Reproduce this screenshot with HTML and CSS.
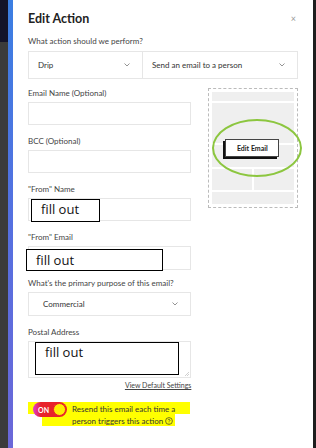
FILE: index.html
```html
<!DOCTYPE html>
<html lang="en">
<head>
    <meta charset="UTF-8">
    <meta name="viewport" content="width=device-width, initial-scale=1.0">
    <title>Edit Action</title>
    <link rel="stylesheet" href="styles.css">
</head>
<body>

    <div class="screen">
        <div class="backdrop"><div class="backdrop-top"></div></div>
        <div class="accent"></div>

        <div class="modal">
            <div class="modal-header">
                <h1>Edit Action</h1>
                <span class="close">&times;</span>
            </div>

            <div class="field-label">What action should we perform?</div>
            <div class="action-row">
                <div class="select select-type">
                    <span>Drip</span>
                    <svg class="chevron" width="6" height="4" viewBox="0 0 6 4"><polyline points="0.5,0.5 3,3 5.5,0.5" /></svg>
                </div>
                <div class="select select-action">
                    <span>Send an email to a person</span>
                    <svg class="chevron" width="6" height="4" viewBox="0 0 6 4"><polyline points="0.5,0.5 3,3 5.5,0.5" /></svg>
                </div>
            </div>

            <div class="form-body">
                <div class="fields">
                    <div class="field">
                        <div class="field-label">Email Name (Optional)</div>
                        <div class="input"></div>
                    </div>
                    <div class="field">
                        <div class="field-label">BCC (Optional)</div>
                        <div class="input"></div>
                    </div>
                    <div class="field">
                        <div class="field-label">"From" Name</div>
                        <div class="input">
                            <div class="note note-name">fill out</div>
                        </div>
                    </div>
                    <div class="field field-tight">
                        <div class="field-label">"From" Email</div>
                        <div class="input input-tall">
                            <div class="note note-email">fill out</div>
                        </div>
                    </div>
                    <div class="field">
                        <div class="field-label">What's the primary purpose of this email?</div>
                        <div class="select select-purpose">
                            <span>Commercial</span>
                            <svg class="chevron" width="6" height="4" viewBox="0 0 6 4"><polyline points="0.5,0.5 3,3 5.5,0.5" /></svg>
                        </div>
                    </div>
                    <div class="field">
                        <div class="field-label">Postal Address</div>
                        <div class="input textarea">
                            <div class="note note-address">fill out</div>
                            <svg class="grip" width="5" height="5" viewBox="0 0 5 5"><line x1="1" y1="5" x2="5" y2="1" /><line x1="3" y1="5" x2="5" y2="3" /></svg>
                        </div>
                    </div>
                    <div class="settings-link"><a href="#">View Default Settings</a></div>
                </div>

                <div class="preview">
                    <div class="preview-box">
                        <div class="block block-top"></div>
                        <div class="block block-hero"></div>
                        <div class="block block-mid"></div>
                        <div class="block-split">
                            <div class="block"></div>
                            <div class="block"></div>
                        </div>
                        <div class="block block-foot"></div>
                    </div>
                    <button class="edit-email">Edit Email</button>
                    <div class="circle-mark"></div>
                </div>
            </div>

            <div class="resend">
                <div class="marker">
                    <div class="marker-line1"></div>
                    <div class="marker-line2"></div>
                </div>
                <div class="toggle">
                    <span class="toggle-text">ON</span>
                    <span class="toggle-knob"></span>
                </div>
                <div class="resend-text">
                    Resend this email each time a<br>
                    person triggers this action
                    <svg class="help" width="8" height="8" viewBox="0 0 8 8"><circle cx="4" cy="4" r="3.4" /><path d="M2.9 3.1 C2.9 2.3 5.1 2.3 5.1 3.2 C5.1 3.9 4 3.9 4 4.7" /><circle class="dot" cx="4" cy="5.9" r="0.4" /></svg>
                </div>
            </div>
        </div>

        <div class="edge"></div>
    </div>

</body>
</html>
```

FILE: styles.css
```css
/* base */
body {
    margin: 0;
    font-family: Lato, "Noto Sans", sans-serif;
    background-color: #fff;
}

.screen {
    display: flex;
    width: 316px;
    height: 448px;
    overflow: hidden;
}

.backdrop {
    width: 8px;
    background-color: #3b3b3b;
}

.backdrop-top {
    height: 42px;
    background-color: #13132a;
}

.accent {
    width: 5px;
    background: linear-gradient(#3b7ee2, #5570e0 50%, #6b67d8);
}

.edge {
    width: 3px;
    background-color: #1e1e1e;
}

/* modal */
.modal {
    position: relative;
    width: 270px;
    padding: 10px 15px 0 15px;
    background-color: #fff;
    color: #333;
}

.modal-header {
    display: flex;
    justify-content: space-between;
    align-items: center;
    height: 16px;
    margin-bottom: 10px;
}

h1 {
    margin: 0;
    font-size: 12.5px;
    font-weight: 700;
    color: #222;
}

.close {
    font-size: 9px;
    color: #999;
    margin-right: 2px;
}

.field-label {
    font-size: 8px;
    line-height: 10px;
    color: #444;
    margin-bottom: 5px;
}

.action-row {
    display: flex;
    height: 28px;
    margin-top: 5px;
}

.select {
    display: flex;
    align-items: center;
    justify-content: space-between;
    box-sizing: border-box;
    border: 1px solid #e6e6e6;
    font-size: 8px;
    color: #333;
    padding: 0 12px 0 9px;
}

.select-type {
    width: 115px;
}

.select-action {
    flex: 1;
    border-left: none;
}

.chevron {
    fill: none;
    stroke: #888;
    stroke-width: 0.9;
}

/* form */
.form-body {
    display: flex;
    gap: 17px;
    margin-top: 9px;
}

.fields {
    width: 164px;
}

.field {
    margin-bottom: 11px;
}

.field-tight {
    margin-bottom: 8px;
}

.field .field-label {
    margin-bottom: 4px;
}

.input {
    position: relative;
    box-sizing: border-box;
    height: 23px;
    border: 1px solid #e6e6e6;
}

.input-tall {
    height: 24px;
}

.select-purpose {
    height: 24px;
    padding-left: 14px;
}

.textarea {
    height: 37px;
}

.grip {
    position: absolute;
    right: 1px;
    bottom: 1px;
    stroke: #bbb;
    stroke-width: 0.7;
}

/* annotations on top of inputs */
.note {
    position: absolute;
    box-sizing: border-box;
    border: 1px solid #000;
    background-color: #fff;
    color: #111;
    font-family: "Open Sans", sans-serif;
    font-size: 13px;
    line-height: 18px;
    padding-left: 9px;
}

.note-name {
    left: 2px;
    top: 0;
    width: 69px;
    height: 23px;
}

.note-email {
    left: -3px;
    top: 2px;
    width: 137px;
    height: 22px;
    line-height: 20px;
}

.note-address {
    left: 6px;
    top: 0;
    width: 144px;
    height: 33px;
}

.settings-link {
    text-align: right;
    font-size: 7px;
    margin-top: -8px;
}

.settings-link a {
    color: #444;
}

/* preview */
.preview {
    position: relative;
    width: 90px;
}

.preview-box {
    box-sizing: border-box;
    height: 120px;
    border: 1px dashed #bbb;
    padding: 3px;
    display: flex;
    flex-direction: column;
    gap: 2px;
}

.block {
    background-color: #efefef;
}

.block-top {
    height: 9px;
}

.block-hero {
    height: 40px;
}

.block-mid {
    height: 22px;
}

.block-split {
    display: flex;
    gap: 2px;
    height: 21px;
}

.block-split .block {
    flex: 1;
}

.block-foot {
    flex: 1;
}

.edit-email {
    position: absolute;
    left: 17px;
    top: 51px;
    width: 54px;
    height: 18px;
    padding: 0;
    border: 1px solid #444;
    background-color: #fff;
    box-shadow: -2px 2px 0 #111;
    font-family: Lato, sans-serif;
    font-size: 7px;
    font-weight: 700;
    color: #222;
}

.circle-mark {
    position: absolute;
    left: 4px;
    top: 31px;
    width: 90px;
    height: 58px;
    box-sizing: border-box;
    border: 2.5px solid #8cc63f;
    border-radius: 50%;
}

/* resend toggle */
.resend {
    position: relative;
    display: flex;
    gap: 5px;
    margin-top: 13px;
}

.marker-line1 {
    position: absolute;
    left: 0;
    top: 0;
    width: 162px;
    height: 12px;
    background-color: #ffff00;
}

.marker-line2 {
    position: absolute;
    left: 14px;
    top: 11px;
    width: 133px;
    height: 13px;
    background-color: #ffff00;
}

.toggle {
    position: relative;
    display: flex;
    align-items: center;
    justify-content: space-between;
    box-sizing: border-box;
    width: 34px;
    height: 15px;
    padding: 0 1px 0 5px;
    border-radius: 8px;
    background: linear-gradient(90deg, #e03ad8 0, #e8232a 8px);
}

.toggle-text {
    font-size: 7px;
    font-weight: 700;
    color: #fff;
}

.toggle-knob {
    width: 11px;
    height: 11px;
    border-radius: 50%;
    background-color: #ffee00;
    border: 1px solid #e8232a;
}

.resend-text {
    position: relative;
    font-size: 8px;
    line-height: 12px;
    color: #333;
    margin-top: 1px;
}

.help {
    vertical-align: -1px;
    fill: none;
    stroke: #333;
    stroke-width: 0.7;
}

.help .dot {
    fill: #333;
    stroke: none;
}
```
